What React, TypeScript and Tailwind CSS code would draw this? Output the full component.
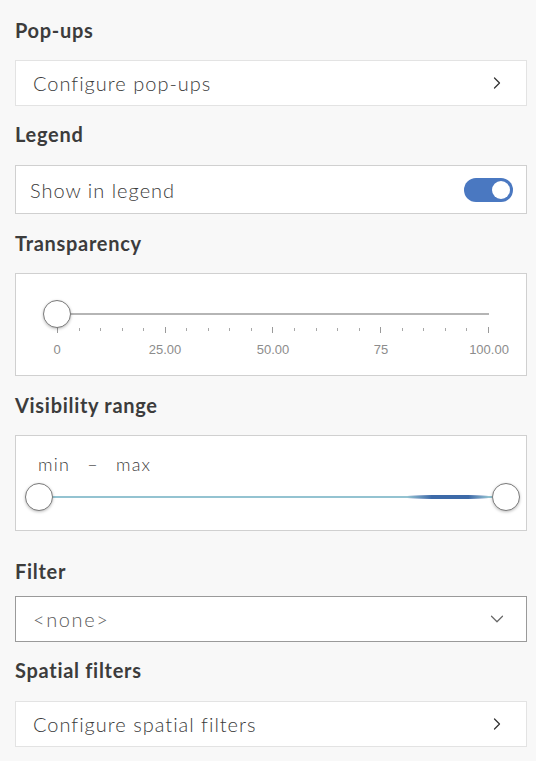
import { ChevronRight, ChevronDown } from 'lucide-react';

const font = { fontFamily: 'Lato, "Open Sans", sans-serif' };

function Heading({ children, className = '' }: { children: string; className?: string }) {
  return (
    <h2 className={`h-6 text-[20px] leading-6 font-bold tracking-[0.035em] text-[#3c3c3c] ${className}`}>
      {children}
    </h2>
  );
}

function LinkRow({ label }: { label: string }) {
  return (
    <div className="h-[46px] flex items-center justify-between bg-white border border-[#e3e3e3] pl-[17px] pr-[19px]">
      <span className="text-[20px] font-light tracking-[0.05em] text-[#3a3a3a]">{label}</span>
      <ChevronRight size={20} strokeWidth={1.5} className="text-[#333]" />
    </div>
  );
}

function Thumb({ className = '' }: { className?: string }) {
  return (
    <div
      className={`absolute top-1/2 -translate-y-1/2 w-7 h-7 rounded-full bg-white border border-[#7a7a7a] shadow-[0_1px_3px_rgba(0,0,0,0.25)] ${className}`}
    />
  );
}

function TransparencySlider() {
  const ticks = Array.from({ length: 21 }, (_, i) => i);
  const labels = ['0', '25.00', '50.00', '75', '100.00'];

  return (
    <div className="bg-white border border-[#d0d0d0] pt-[27px] pb-[17px] pl-[41px] pr-[37px]">
      {/* track + thumb */}
      <div className="relative h-[26px] flex items-center">
        <div className="w-full h-[2px] bg-[#b5b5b5]" />
        <Thumb className="-left-[14px]" />
      </div>
      {/* ticks */}
      <div className="flex justify-between items-start h-[6px]">
        {ticks.map((i) => (
          <div
            key={i}
            className={
              i % 5 === 0
                ? 'w-px h-[6px] bg-[#9a9a9a]'
                : 'w-px h-[3px] mt-[1px] bg-[#a8a8a8]'
            }
          />
        ))}
      </div>
      {/* labels */}
      <div className="flex justify-between mt-[9px] h-4">
        {labels.map((l) => (
          <div key={l} className="w-0 flex justify-center">
            <span
              className="whitespace-nowrap text-[13px] leading-4 text-[#8c8c8c]"
              style={{ fontFamily: '"Liberation Sans", Arial, sans-serif' }}
            >
              {l}
            </span>
          </div>
        ))}
      </div>
    </div>
  );
}

function VisibilityRange() {
  return (
    <div className="bg-white border border-[#d0d0d0] pt-4 pb-[19px]">
      <div className="pl-[22px] text-[18px] leading-6 font-light tracking-[0.07em] text-[#3a3a3a] flex gap-[17px]">
        <span>min</span>
        <span>–</span>
        <span>max</span>
      </div>
      <div className="relative h-7 mt-[7px] ml-[23px] mr-[20px] flex items-center">
        <div className="relative w-full h-[2px] bg-[#94c3d1]">
          <div className="absolute left-[368px] w-[82px] -top-px h-1 rounded-full bg-[linear-gradient(90deg,rgba(61,106,168,0)_0%,#3d6aa8_30%,#3d6aa8_75%,rgba(61,106,168,0)_100%)]" />
        </div>
        <Thumb className="-left-[14px]" />
        <Thumb className="-right-[14px]" />
      </div>
    </div>
  );
}

export default function App() {
  return (
    <div className="min-h-screen w-[536px] bg-[#f8f8f8] pt-[18px] px-[15px] pr-[9px]" style={font}>
      <Heading className="mb-[18px]">Pop-ups</Heading>
      <LinkRow label="Configure pop-ups" />

      <Heading className="mt-4 mb-[19px]">Legend</Heading>
      <div className="h-[49px] flex items-center justify-between bg-white border border-[#d0d0d0] pl-[14px] pr-[13px]">
        <span className="text-[20px] font-light tracking-[0.05em] text-[#3a3a3a]">Show in legend</span>
        <div className="w-[49px] h-6 rounded-full bg-[#4a78c1] flex items-center justify-end pr-[3px]">
          <div className="w-[18px] h-[18px] rounded-full bg-white" />
        </div>
      </div>

      <Heading className="mt-[17px] mb-[18px]">Transparency</Heading>
      <TransparencySlider />

      <Heading className="mt-[17px] mb-[18px]">Visibility range</Heading>
      <VisibilityRange />

      <Heading className="mt-7 mb-[13px]">Filter</Heading>
      <div className="h-[46px] flex items-center justify-between bg-white border border-[#9a9a9a] pl-[17px] pr-[18px]">
        <span className="text-[20px] font-light tracking-[0.08em] text-[#5a5a5a]">&lt;none&gt;</span>
        <ChevronDown size={22} strokeWidth={1.3} className="text-[#666]" />
      </div>

      <Heading className="mt-4 mb-[19px]">Spatial filters</Heading>
      <LinkRow label="Configure spatial filters" />
    </div>
  );
}
